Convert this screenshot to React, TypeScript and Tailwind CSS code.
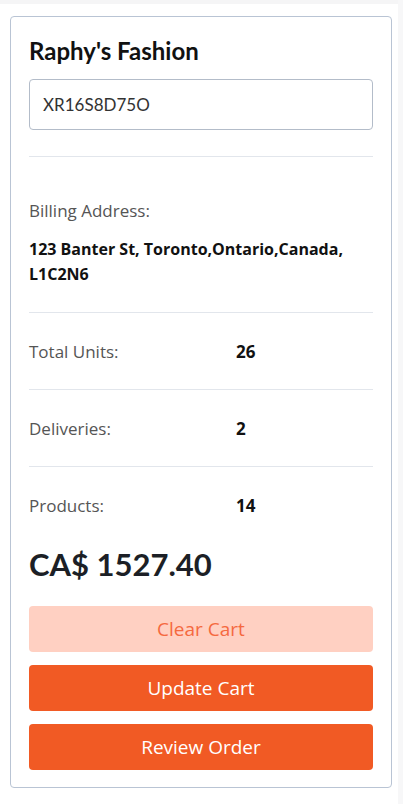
export default function App() {
  const rows = [
    { label: "Total Units:", value: "26" },
    { label: "Deliveries:", value: "2" },
    { label: "Products:", value: "14" },
  ];

  return (
    <div className="min-h-[804px] w-[403px] bg-white flex">
      <div className="flex-1 flex flex-col">
        <div className="h-[4px] bg-[#f5f5f6]" />
        <div className="pl-[10px] pr-[6px] pt-[12px]">
          <div className="border border-[#b9c4d4] rounded-[4px] px-[18px] pt-[19px] pb-[17px] font-['Open_Sans',sans-serif]">
            <h2 className="font-['Lato',sans-serif] font-bold text-[24px] leading-[30px] text-[#111]">
              Raphy's Fashion
            </h2>
            <div className="mt-[13px] h-[51px] border border-[#b3bcc9] rounded-[4px] px-[13px] flex items-center">
              <span className="font-['Lato',sans-serif] text-[17px] text-[#333]">XR16S8D75O</span>
            </div>
            <div className="mt-[26px] h-px bg-[#e2e6ec]" />
            <div className="pt-[43px] pb-[25px] border-b border-[#e2e6ec]">
              <div className="text-[17px] leading-[22px] text-[#555]">Billing Address:</div>
              <div className="mt-[15px] text-[16px] leading-[25px] font-bold text-[#111]">
                123 Banter St, Toronto,Ontario,Canada, L1C2N6
              </div>
            </div>
            {rows.map((r, i) => (
              <div
                key={r.label}
                className={
                  "grid grid-cols-[207px_1fr] items-center leading-[22px] pt-[28px] " +
                  (i < rows.length - 1 ? "pb-[26px] border-b border-[#e2e6ec]" : "pb-[27px]")
                }
              >
                <span className="text-[17px] text-[#555]">{r.label}</span>
                <span className="text-[17px] font-bold text-[#111]">{r.value}</span>
              </div>
            ))}
            <div className="font-['Lato',sans-serif] font-bold text-[31px] leading-[40px] text-[#1c1f26]">
              CA$ 1527.40
            </div>
            <div className="mt-[22px] flex flex-col gap-[13px]">
              <button className="h-[46px] rounded-[4px] bg-[#ffd0c2] text-[#f5693f] text-[19px]">
                Clear Cart
              </button>
              <button className="h-[46px] rounded-[4px] bg-[#f15a24] text-white text-[19px]">
                Update Cart
              </button>
              <button className="h-[46px] rounded-[4px] bg-[#f15a24] text-white text-[19px]">
                Review Order
              </button>
            </div>
          </div>
        </div>
      </div>
      <div className="w-[5px] bg-[#f7f7f8]" />
    </div>
  );
}
